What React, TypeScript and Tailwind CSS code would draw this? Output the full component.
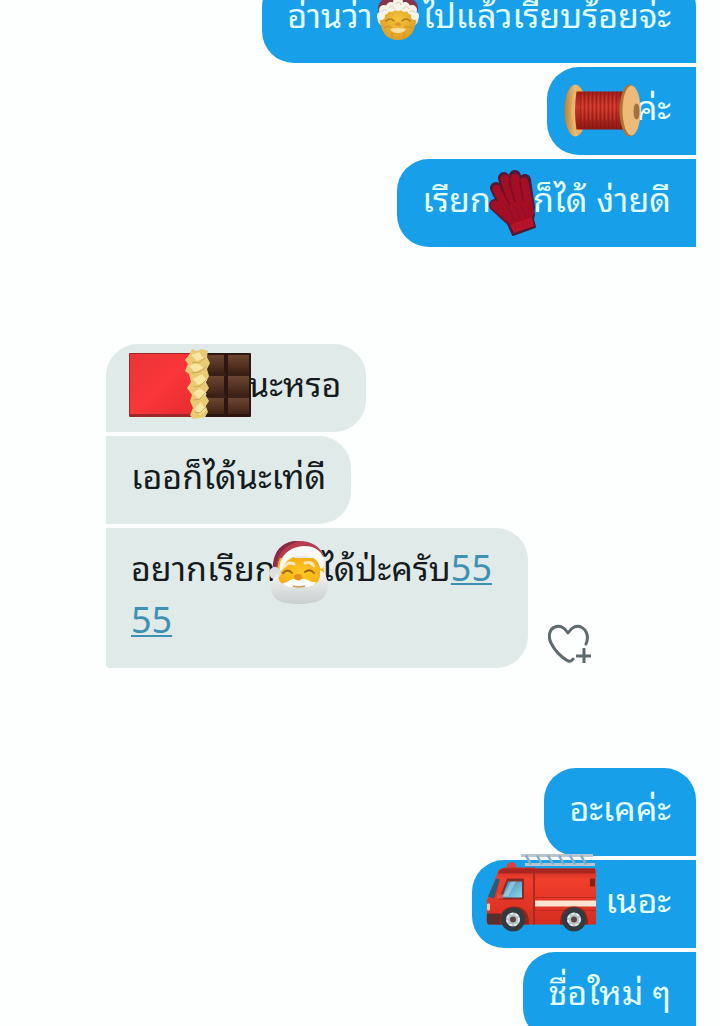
import clsx from "clsx";
import type { ReactNode } from "react";

const Sticker = ({
  label,
  viewBox,
  slot,
  size,
  children,
}: {
  label: string;
  viewBox: string;
  slot: string;
  size: string;
  children: ReactNode;
}) => (
  <span className={clsx("relative -mb-3 h-16 shrink-0", slot)}>
    <svg
      role="img"
      aria-label={label}
      viewBox={viewBox}
      className={clsx(
        "absolute left-1/2 top-1/2 max-w-none -translate-x-1/2 -translate-y-1/2",
        size
      )}
    >
      {children}
    </svg>
  </span>
);

const MrsClaus = () => (
  <Sticker label="Mrs. Claus" viewBox="0 0 44 52" slot="w-[50px]" size="h-[52px] w-[44px]">
    <defs>
      <radialGradient id="claus-face" cx="50%" cy="45%" r="60%">
        <stop offset="0" stopColor="#f3c63c" />
        <stop offset="1" stopColor="#dd9a22" />
      </radialGradient>
    </defs>
    <ellipse cx="22" cy="15" rx="20" ry="13" fill="#86324c" />
    <path d="M4 20c-4 5-3 10 2 13l4-4V20zM40 20c4 5 3 10-2 13l-4-4V20z" fill="#e3dfd2" />
    <path d="M4 25c0-11 8-15 18-15s18 4 18 15c0 14-7 22-18 22S4 39 4 25z" fill="url(#claus-face)" />
    <g fill="#f7f3e8">
      <circle cx="5" cy="23" r="4" />
      <circle cx="8" cy="17" r="5" />
      <circle cx="15" cy="14" r="5" />
      <circle cx="22" cy="9" r="5" />
      <circle cx="22" cy="14" r="4" />
      <circle cx="29" cy="14" r="5" />
      <circle cx="36" cy="17" r="5" />
      <circle cx="39" cy="23" r="4" />
    </g>
    <g fill="none" stroke="#d5cbb4" strokeWidth="1">
      <path d="M6 19c1-3 4-3 5-1M13 15c2-3 5-2 5 1M20 11c1-3 5-2 5 1M27 16c1-3 5-3 6 0M34 19c1-2 4-2 5 1" />
    </g>
    <g fill="none" stroke="#b27a20" strokeWidth="1.6" strokeLinecap="round">
      <path d="M10 28q4-4 8 0M26 28q4-4 8 0" />
      <path d="M8 35q4-3 7-1M36 35q-4-3-7-1M16 40v5M28 40v5" stroke="#cf8d22" strokeWidth="1" />
    </g>
    <ellipse cx="22" cy="31" rx="3" ry="2" fill="#e09a28" />
    <path d="M14 36q8-2 16 0-2 4-8 4t-8-4z" fill="#f8dfa6" />
  </Sticker>
);

const Thread = () => (
  <Sticker label="Spool of thread" viewBox="0 0 81 53" slot="w-[64px]" size="h-[53px] w-[81px]">
    <defs>
      <linearGradient id="spool-wood" x1="0" x2="1">
        <stop offset="0" stopColor="#b98038" />
        <stop offset="0.5" stopColor="#edbb71" />
        <stop offset="1" stopColor="#c38b48" />
      </linearGradient>
      <linearGradient id="spool-red" x1="0" x2="0" y1="0" y2="1">
        <stop offset="0" stopColor="#9d1e17" />
        <stop offset="0.4" stopColor="#cc3529" />
        <stop offset="1" stopColor="#8f1814" />
      </linearGradient>
    </defs>
    <ellipse cx="12" cy="26" rx="11" ry="26" fill="url(#spool-wood)" />
    <ellipse cx="15" cy="26" rx="7" ry="23" fill="#e9b66d" />
    <path d="M13 7h50v38H13q-3-18 0-38z" fill="url(#spool-red)" />
    <g stroke="#7b1714" strokeWidth="1" opacity="0.4">
      <path d="M17 7v38M21 7v38M25 7v38M29 7v38M33 7v38M37 7v38M41 7v38M45 7v38M49 7v38M53 7v38M57 7v38" />
    </g>
    <g stroke="#e3503f" strokeWidth="1" opacity="0.4">
      <path d="M19 10v25M23 10v25M27 10v25M31 10v25M35 10v25M39 10v25M43 10v25M47 10v25M51 10v25" />
    </g>
    <path d="M58 7h8v38h-8z" fill="#61120f" opacity="0.5" />
    <ellipse cx="66" cy="26" rx="10" ry="26" fill="#ad7436" />
    <ellipse cx="68" cy="26" rx="9" ry="25" fill="#edba78" />
    <ellipse cx="73" cy="27" rx="3" ry="8" fill="#a17040" />
  </Sticker>
);

const Glove = () => (
  <Sticker label="Red glove" viewBox="0 0 50 68" slot="w-[42px]" size="h-[68px] w-[50px]">
    <g stroke="#4f1a35" strokeLinecap="round" strokeLinejoin="round" fill="#4f1a35">
      <path d="m9 19 12 25M17 9l11 33M28 7l6 33M38 11l4 28M8 36l14 13" strokeWidth="12" />
      <path d="M16 36 45 30l2 16-1 4 2 8-22 8-5-11-4-8z" strokeWidth="2" />
    </g>
    <g stroke="#a30e24" strokeLinecap="round" strokeLinejoin="round" fill="#a30e24">
      <path d="m10 20 12 24M18 10l10 32M28 9l6 31M37 13l5 26M8 36l14 13" strokeWidth="9" />
      <path d="m17 36 27-4 2 12-2 4-20 7-6-8z" strokeWidth="2" />
    </g>
    <path d="M13 18 23 36M22 12l6 21M33 12l3 20" stroke="#7e0c24" strokeWidth="1.5" fill="none" />
    <path d="M17 35q8 6 10 16M26 36q5 6 7 13M33 36q5 5 6 11" stroke="#8c0d24" strokeWidth="1" fill="none" />
    <path d="m23 56 22-8 2 9-20 7z" fill="#b9142a" />
    <path d="m27 56 2 6M31 55l2 5M35 53l2 6M39 52l2 5" stroke="#a01127" />
  </Sticker>
);

const Chocolate = () => (
  <Sticker label="Chocolate bar" viewBox="0 0 122 78" slot="w-[117px]" size="h-[78px] w-[122px]">
    <defs>
      <linearGradient id="wrapper" x1="0" x2="1" y1="0" y2="1">
        <stop offset="0" stopColor="#e83538" />
        <stop offset="0.5" stopColor="#fa3639" />
        <stop offset="1" stopColor="#e52b30" />
      </linearGradient>
      <linearGradient id="cocoa" x1="0" x2="0" y1="0" y2="1">
        <stop offset="0" stopColor="#6c4532" />
        <stop offset="1" stopColor="#412417" />
      </linearGradient>
    </defs>
    <rect x="76" y="4" width="46" height="64" rx="1" fill="#2c160f" />
    <g fill="url(#cocoa)">
      <rect x="78" y="6" width="17" height="17" />
      <rect x="99" y="6" width="21" height="17" />
      <rect x="78" y="27" width="17" height="18" />
      <rect x="99" y="27" width="21" height="18" />
      <rect x="78" y="49" width="17" height="16" />
      <rect x="99" y="49" width="21" height="16" />
    </g>
    <path d="M78 23h17l3 4H78zM99 23h21v4H99zM78 45h17l3 4H78zM99 45h21v4H99z" fill="#3a2016" />
    <rect y="4" width="67" height="64" rx="1" fill="#9e2827" />
    <rect x="1" y="5" width="66" height="60" fill="url(#wrapper)" />
    <path
      d="m63 0 5 2 5-2 6 2-1 6 3 6-3 6 2 7-3 6 3 6-4 6 4 7-3 5 2 6-3 5-6 1-6 1-3-4 3-7-3-7 2-6-5-7 4-6-2-8-4-3 3-7-3-4 4-5z"
      fill="#e8ca72"
    />
    <path d="m62 6 8-3 5 6-7 3zM60 17l8-3 7 5-9 4zM64 30l9-5 5 7-9 4zM64 44l7-5 7 6-8 5zM65 60l7-7 5 8-6 5z" fill="#f9e6a3" />
    <path d="m63 13 6 1 7-5M62 24l8-1 7-5M65 38l6-1 6-6M64 51l7-1 5-6M66 63l5 1 6-6" fill="none" stroke="#cfa653" strokeWidth="1" />
  </Sticker>
);

const Santa = () => (
  <Sticker label="Santa Claus" viewBox="0 0 60 64" slot="w-[46px]" size="h-[64px] w-[60px]">
    <defs>
      <linearGradient id="beard" x1="0" x2="0" y1="0" y2="1">
        <stop offset="0" stopColor="#f7f7f5" />
        <stop offset="1" stopColor="#c8cfcf" />
      </linearGradient>
      <radialGradient id="santa-face">
        <stop offset="0" stopColor="#ffca24" />
        <stop offset="1" stopColor="#f4ae16" />
      </radialGradient>
    </defs>
    <path d="M5 28C3 12 15 1 30 1c13 0 22 6 25 16L40 12 15 21l-3 11z" fill="#b63c50" />
    <path d="M7 26C9 12 18 5 30 1 14 0 4 11 4 27z" fill="#8d2a43" />
    <path d="M11 18h41c4 12 4 22 0 30H10c-3-9-3-20 1-30z" fill="url(#santa-face)" />
    <path d="M11 31C9 20 17 7 35 6c12 0 20 6 20 17 0 5-3 7-4 5-1-7-6-12-16-12-12 0-18 4-20 10-1 3-2 6-4 5z" fill="#faf9f5" />
    <circle cx="6" cy="33" r="6" fill="#dce1df" />
    <path
      d="M9 33c-1 8 4 12 10 12 4 0 7-3 11-3s8 3 12 3c6 0 10-5 9-15 9 4 10 20 4 27-4 5-13 7-25 7S9 62 5 57c-5-7-3-18 4-24z"
      fill="url(#beard)"
    />
    <path d="M14 43c4 0 7-4 11-4 3 0 5 2 5 2s2-2 5-2c4 0 7 4 12 3-2 5-11 6-17 4-6 2-14 1-16-3z" fill="#fff" />
    <path d="M24 46q6 2 12 0" stroke="#d99a52" strokeWidth="1.5" fill="none" />
    <path d="M15 27q4-6 10-3M36 23q6-2 9 3" stroke="#fae9b8" strokeWidth="3" fill="none" strokeLinecap="round" />
    <path d="M14 33q5-5 9 0M36 32q5-4 9 1" stroke="#9a641c" strokeWidth="1.8" fill="none" strokeLinecap="round" />
    <ellipse cx="29" cy="37" rx="4" ry="3" fill="#e98c1d" />
  </Sticker>
);

const FireEngine = () => (
  <Sticker label="Fire engine" viewBox="0 0 130 101" slot="w-[108px]" size="h-[101px] w-[130px]">
    <defs>
      <linearGradient id="engine" x1="0" x2="0" y1="0" y2="1">
        <stop offset="0" stopColor="#c83024" />
        <stop offset="0.2" stopColor="#f03f2c" />
        <stop offset="1" stopColor="#d52d20" />
      </linearGradient>
      <linearGradient id="windshield" x1="0" x2="1" y1="0" y2="1">
        <stop offset="0" stopColor="#3b85ac" />
        <stop offset="1" stopColor="#8fd6ee" />
      </linearGradient>
    </defs>
    <path d="M35 2h72M39 11h70" stroke="#b8c5ce" strokeWidth="3" />
    <path d="m40 2 5 9M51 2l5 9M62 2l5 9M73 2l5 9M84 2l5 9M95 2l5 9" stroke="#87acc4" strokeWidth="2.5" />
    <path d="M21 15v-4q5-5 9 0v4z" fill="#d94338" />
    <path d="M12 18q2-4 9-4h28v57H3q-3-1-2-7V47z" fill="url(#engine)" />
    <path d="M48 15h60q2 0 2 2v54H48z" fill="url(#engine)" />
    <path d="M12 20q2-5 9-5h88v5z" fill="#a9251e" />
    <path d="M48 18v53" stroke="#9a241d" strokeWidth="1.5" />
    <path d="M49 47h61v6H49z" fill="#fae4cf" />
    <path d="M49 44h61M49 57h61" stroke="#bd2a20" />
    <path d="M11 25h-1L2 43l6 2 6-19z" fill="#275e79" />
    <path d="M21 25h17v21H13z" fill="#862923" />
    <path d="M22 28h14v16H16z" fill="url(#windshield)" />
    <path d="M17 43 25 28h5l-8 15z" fill="#b7e5ef" opacity="0.5" />
    <path d="M11 41h6v4h-6z" fill="#e6523c" />
    <rect x="104" y="25" width="5" height="8" fill="#852018" />
    <rect x="1" y="50" width="3" height="7" rx="1" fill="#f3c9a6" />
    <path d="M1 60h14v11H2q-2-3-1-11z" fill="#592e2b" />
    <path d="M13 67q2-14 15-14t15 14v4H13zM74 67q2-14 14-14t14 14v4H74z" fill="#8b251f" />
    <g fill="#333b42">
      <circle cx="27" cy="66" r="12" />
      <circle cx="88" cy="66" r="12" />
    </g>
    <g fill="#b8c4c8">
      <circle cx="27" cy="66" r="7" />
      <circle cx="88" cy="66" r="7" />
    </g>
    <g fill="#5d4244">
      <circle cx="27" cy="66" r="3" />
      <circle cx="88" cy="66" r="3" />
    </g>
    <g fill="none" stroke="#edf1f0" strokeWidth="1.5" strokeDasharray="3 2">
      <circle cx="27" cy="66" r="6" />
      <circle cx="88" cy="66" r="6" />
    </g>
  </Sticker>
);

const Bubble = ({
  mine = false,
  first = false,
  last = false,
  children,
}: {
  mine?: boolean;
  first?: boolean;
  last?: boolean;
  children: ReactNode;
}) => (
  <div
    className={clsx(
      "max-w-[450px] px-[25px] pt-3 pb-6 whitespace-nowrap",
      mine
        ? "rounded-l-[32px] bg-[#189fe9] text-[#e4ffff]"
        : "rounded-r-[32px] bg-[#e0eae9] text-[#151b1c]",
      mine && first && "rounded-tr-[32px]",
      !mine && first && "rounded-tl-[32px]",
      !mine && last && "rounded-bl-[4px]"
    )}
  >
    {children}
  </div>
);

const Line = ({ children }: { children: ReactNode }) => (
  <p className="flex h-[52px] items-start">{children}</p>
);

const NumberLink = () => (
  <a
    href="tel:5555"
    className="pt-0.5 font-['Noto_Sans',sans-serif] text-[36px] leading-[52px] text-[#3d92b4] underline decoration-2 underline-offset-2"
  >
    55
  </a>
);

const App = () => {
  return (
    <main className="flex h-screen flex-col overflow-hidden bg-[#fdfefe] pr-6 pl-[106px] font-['Noto_Sans_Thai_Looped','Loma','Noto_Sans',sans-serif] text-[34px] leading-[52px]">
      <section className="-mt-[25px] flex flex-col items-end gap-1">
        <Bubble mine first>
          <Line>
            <span>อ่านว่า</span>
            <MrsClaus />
            <span>ไปแล้วเรียบร้อยจ่ะ</span>
          </Line>
        </Bubble>
        <Bubble mine>
          <Line>
            <Thread />
            <span>ค่ะ</span>
          </Line>
        </Bubble>
        <Bubble mine last>
          <Line>
            <span>เรียก</span>
            <Glove />
            <span>ก็ได้ ง่ายดี</span>
          </Line>
        </Bubble>
      </section>

      <section className="mt-[97px] flex flex-col items-start gap-1">
        <Bubble first>
          <Line>
            <Chocolate />
            <span>นะหรอ</span>
          </Line>
        </Bubble>
        <Bubble>
          <Line>เออก็ได้นะเท่ดี</Line>
        </Bubble>
        <div className="flex items-end gap-5">
          <Bubble last>
            <div className="pr-[11px]">
              <Line>
                <span>อยากเรียก</span>
                <Santa />
                <span>ได้ป่ะครับ</span>
                <NumberLink />
              </Line>
              <Line>
                <NumberLink />
              </Line>
            </div>
          </Bubble>
          <button type="button" aria-label="Add reaction" className="cursor-pointer pb-1">
            <svg
              viewBox="0 0 44 40"
              className="h-10 w-11"
              fill="none"
              stroke="#5d6b6e"
              strokeWidth="3"
              strokeLinecap="round"
              strokeLinejoin="round"
            >
              <path d="M38 20c3-7 1-14-5-17C28 1 23 4 20 9 17 4 12 1 7 3 1 5 0 13 3 19c4 8 10 14 17 18q3 1 5-2" />
              <path d="M36 24v15M28 32h15" strokeLinecap="butt" />
            </svg>
          </button>
        </div>
      </section>

      <section className="mt-[100px] flex flex-col items-end gap-1">
        <Bubble mine first>
          <Line>อะเคค่ะ</Line>
        </Bubble>
        <Bubble mine>
          <Line>
            <FireEngine />
            <span>เนอะ</span>
          </Line>
        </Bubble>
        <Bubble mine>
          <Line>ชื่อใหม่ ๆ</Line>
        </Bubble>
      </section>
    </main>
  );
};

export default App;
